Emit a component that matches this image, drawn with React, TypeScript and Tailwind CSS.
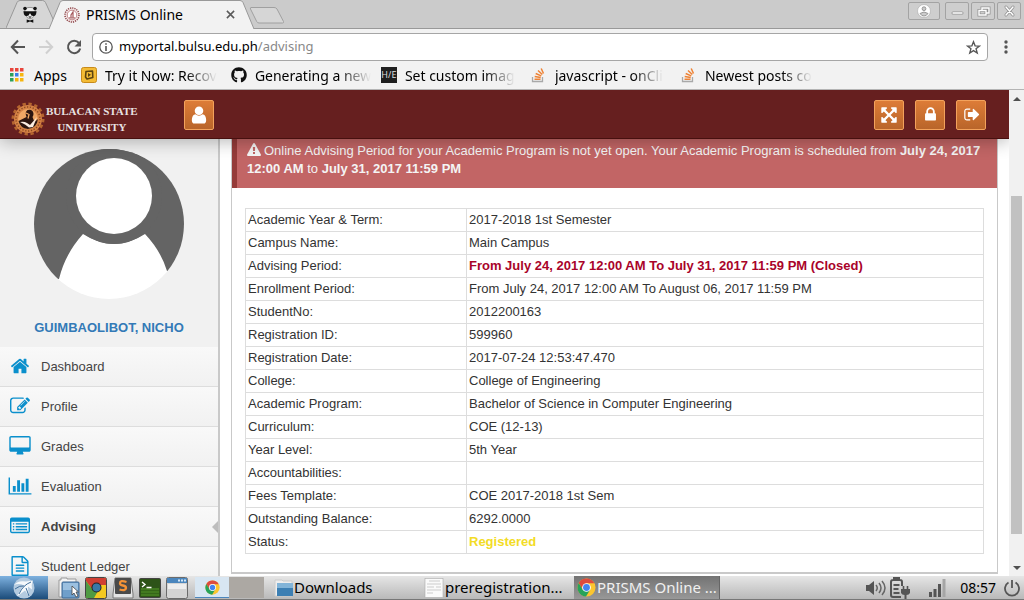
import type { ReactNode } from "react";
import { FaGithub } from "react-icons/fa";

const glyphs = {
  home: { box: "0 0 1792 1792", d: "M1472 992v480q0 26-19 45t-45 19h-384v-384h-256v384h-384q-26 0-45-19t-19-45v-480q0-1 .5-3t.5-3l575-474 575 474q1 2 1 6zm223-69l-62 74q-8 9-21 11h-3q-13 0-21-7l-692-577-692 577q-12 8-24 7-13-2-21-11l-62-74q-8-10-7-23.5t11-21.5l719-599q32-26 76-26t76 26l244 204v-195q0-14 9-23t23-9h192q14 0 23 9t9 23v408l219 182q10 8 11 21.5t-7 23.5z" },
  profile: { box: "0 0 1792 1792", d: "M888 1184l116-116-152-152-116 116v56h96v96h56zm440-720q-16-16-33 1l-350 350q-17 17-1 33t33-1l350-350q17-17 1-33zm80 594v190q0 119-84.5 203.5t-203.5 84.5h-832q-119 0-203.5-84.5t-84.5-203.5v-832q0-119 84.5-203.5t203.5-84.5h832q63 0 117 25 15 7 18 23 3 17-9 29l-49 49q-14 14-32 8-23-6-45-6h-832q-66 0-113 47t-47 113v832q0 66 47 113t113 47h832q66 0 113-47t47-113v-126q0-13 9-22l64-64q15-15 35-7t20 29zm-96-738l288 288-672 672h-288v-288zm444 132l-92 92-288-288 92-92q28-28 68-28t68 28l152 152q28 28 28 68t-28 68z" },
  desktop: { box: "0 0 1920 1792", d: "M1792 992v-832q0-13-9.500-22.500t-22.500-9.500h-1600q-13 0-22.500 9.500t-9.500 22.500v832q0 13 9.500 22.500t22.500 9.500h1600q13 0 22.500-9.500t9.500-22.500zM1920 160v1088q0 66-47 113t-113 47h-544q0 37 16 77.500t32 71 16 43.500q0 26-19 45t-45 19h-512q-26 0-45-19t-19-45q0-14 16-44t32-70 16-78h-544q-66 0-113-47t-47-113v-1088q0-66 47-113t113-47h1600q66 0 113 47t47 113z" },
  chart: { box: "0 0 2048 1792", d: "M640 896v512h-256v-512h256zm384-512v1024h-256v-1024h256zm1024 1152v128h-2048v-1536h128v1408h1920zm-640-896v768h-256v-768h256zm384-384v1152h-256v-1152h256z" },
  list: { box: "0 0 1792 1792", d: "M160 128h1472q160 0 160 160v1088q0 160-160 160h-1472q-160 0-160-160v-1088q0-160 160-160zM128 512v864q0 32 32 32h1472q32 0 32-32v-864zM256 640h128v128h-128zM512 640h1024v128h-1024zM256 896h128v128h-128zM512 896h1024v128h-1024zM256 1152h128v128h-128zM512 1152h1024v128h-1024z" },
  file: { box: "0 0 1536 1792", d: "M1468 380q28 28 48 76t20 88v1152q0 40-28 68t-68 28h-1344q-40 0-68-28t-28-68v-1600q0-40 28-68t68-28h896q40 0 88 20t76 48zM1024 136v376h376q-10-29-22-41l-313-313q-12-12-41-22zM1408 1664v-1024h-416q-40 0-68-28t-28-68v-416h-768v1536zM384 800q0-32 32-32h704q32 0 32 32v64q0 32-32 32h-704q-32 0-32-32zM416 1024h704q32 0 32 32v64q0 32-32 32h-704q-32 0-32-32v-64q0-32 32-32zM416 1280h704q32 0 32 32v64q0 32-32 32h-704q-32 0-32-32v-64q0-32 32-32z" },
  user: { box: "0 0 1792 1792", d: "M1536 1399q0 109-62.5 187t-150.5 78h-854q-88 0-150.5-78t-62.5-187q0-85 8.5-160.5t31.5-152 58.5-131 94-89 134.5-34.5q131 128 313 128t313-128q76 0 134.5 34.5t94 89 58.5 131 31.5 152 8.5 160.5zm-256-887q0 159-112.5 271.5t-271.5 112.5-271.5-112.5-112.5-271.5 112.5-271.5 271.5-112.5 271.5 112.5 112.5 271.5z" },
  lock: { box: "0 0 1792 1792", d: "M640 768h512v-192q0-106-75-181t-181-75-181 75-75 181v192zm832 96v576q0 40-28 68t-68 28h-960q-40 0-68-28t-28-68v-576q0-40 28-68t68-28h32v-192q0-184 132-316t316-132 316 132 132 316v192h32q40 0 68 28t28 68z" },
  expand: { box: "0 0 1792 1792", d: "M1411 541l-355 355 355 355 144-144q29-31 70-14 39 17 39 59v448q0 26-19 45t-45 19h-448q-42 0-59-40-17-39 14-69l144-144-355-355-355 355 144 144q31 30 14 69-17 40-59 40h-448q-26 0-45-19t-19-45v-448q0-42 40-59 39-17 69 14l144 144 355-355-355-355-144 144q-19 19-45 19-12 0-24-5-40-17-40-59v-448q0-26 19-45t45-19h448q42 0 59 40 17 39-14 69l-144 144 355 355 355-355-144-144q-31-30-14-69 17-40 59-40h448q26 0 45 19t19 45v448q0 42-39 59-13 5-25 5-26 0-45-19z" },
  signOut: { box: "0 0 1664 1792", d: "M704 1440q0 4 1 20t.5 26.5-3 23.5-10 19.5-20.5 6.5h-320q-119 0-203.5-84.5t-84.5-203.5v-704q0-119 84.5-203.5t203.5-84.5h320q13 0 22.5 9.5t9.5 22.5q0 4 1 20t.5 26.5-3 23.5-10 19.5-20.5 6.5h-320q-66 0-113 47t-47 113v704q0 66 47 113t113 47h312l11.5 1 11.5 3 8 5.5 7 9 2 13.5zm928-544q0 26-19 45l-544 544q-19 19-45 19t-45-19-19-45v-288h-448q-26 0-45-19t-19-45v-384q0-26 19-45t45-19h448v-288q0-26 19-45t45-19 45 19l544 544q19 19 19 45z" },
  warning: { box: "0 0 1792 1792", d: "M1024 1375v-190q0-14-9.5-23.5t-22.5-9.5h-192q-13 0-22.5 9.5t-9.5 23.5v190q0 14 9.5 23.5t22.5 9.5h192q13 0 22.5-9.5t9.5-23.5zm-2-374l18-459q0-12-10-19-13-11-24-11h-220q-11 0-24 11-10 7-10 21l17 457q0 10 10 16.5t24 6.5h185q14 0 23.5-6.5t10.5-16.5zm-14-934l768 1408q35 63-2 126-17 29-46.5 46t-63.5 17h-1536q-34 0-63.5-17t-46.5-46q-37-63-2-126l768-1408q17-31 47-49t65-18 65 18 47 49z" },
};

function Glyph({ name, className }: { name: keyof typeof glyphs; className: string }) {
  const g = glyphs[name];
  return (
    <svg viewBox={g.box} className={className} fill="currentColor" fillRule="evenodd" aria-hidden="true">
      <path d={g.d} />
    </svg>
  );
}

/* ---------- Browser chrome ---------- */

function PandaIcon() {
  return (
    <svg viewBox="0 0 16 18" className="relative h-[17px] w-4" aria-hidden="true">
      <path d="M2.500 5Q3 1.500 8 1.500T13.500 5L13 9Q11 13.500 8 13.500T3 9z" fill="#eee" stroke="#555" strokeWidth=".6" />
      <circle cx="2.700" cy="2.600" r="1.900" fill="#111" />
      <circle cx="13.300" cy="2.600" r="1.900" fill="#111" />
      <path d="M1 5.500h14l-.6 3.200q-.8 2-3 2-2.400 0-3-2.700h-.8q-.6 2.700-3 2.700-2.200 0-3-2z" fill="#111" />
      <path d="M6.200 11h3.600L8 12.800zM4.500 14.300 8 15.300l3.500-1v3.500L8 16.500l-3.500 1.300z" fill="#111" />
    </svg>
  );
}

function SealIcon() {
  return (
    <svg viewBox="0 0 16 16" className="relative size-4" aria-hidden="true">
      <circle cx="8" cy="8" r="7" fill="#f3e4e4" stroke="#8b4044" strokeWidth="1.500" strokeDasharray="1.200 1" />
      <circle cx="8" cy="8" r="4.800" fill="#fff" stroke="#c28b8e" />
      <path d="M5.200 10.800h5.600M7 10V8L9 5v5" stroke="#a5575b" strokeWidth="1.200" fill="none" />
    </svg>
  );
}

function TabStrip() {
  return (
    <div className="relative flex h-[29px] shrink-0 border-b border-[#999] bg-[#cbcbcb]">
      <button aria-label="Pinned tab" className="relative ml-[6px] flex h-[28px] w-[48px] items-center justify-center">
        <svg viewBox="0 0 48 28" preserveAspectRatio="none" className="absolute inset-0 h-full w-full" aria-hidden="true">
          <path d="M0 28 11 2.500Q12 .5 14 .5H36.500Q38.500 .5 39.500 2.500L47 19V28" fill="#d6d6d6" stroke="#999" />
        </svg>
        <PandaIcon />
      </button>
      <div className="relative z-10 -mx-[5px] flex h-[29px] w-[205px] items-center gap-[6px] pr-[19px] pl-[15px]">
        <svg viewBox="0 0 205 29" preserveAspectRatio="none" className="absolute inset-0 h-full w-full" aria-hidden="true">
          <path d="M0 29 11 2.500Q12 .5 14 .5H191Q193 .5 194 2.500L205 29" fill="#f2f2f2" stroke="#999" />
        </svg>
        <SealIcon />
        <span className="relative flex-1 truncate text-[14px]">PRISMS Online</span>
        <button aria-label="Close tab" className="relative">
          <svg viewBox="0 0 10 10" className="size-[9px]" aria-hidden="true">
            <path d="M1 1l8 8M9 1l-8 8" stroke="#5a5a5a" strokeWidth="1.700" />
          </svg>
        </button>
      </div>
      <button aria-label="New tab" className="mt-[6px] self-start">
        <svg viewBox="0 0 36 18" className="h-[18px] w-[36px]" aria-hidden="true">
          <path d="M2 1.500H25Q27 1.500 28 3L34.500 15.500Q35 17 33.500 17H10Q8.500 17 7.700 15.500L1.500 3Q1 1.500 2 1.500z" fill="#d6d6d6" stroke="#a0a0a0" />
        </svg>
      </button>
      <div className="ml-auto flex gap-[2px] pt-[2px] pr-[3px]">
        <button aria-label="Profile switcher" className="mr-[3px] flex h-[18px] w-[32px] items-center justify-center rounded-xs border border-[#a3a3a3] bg-[#cecece]">
          <svg viewBox="0 0 14 14" className="size-[14px]" aria-hidden="true">
            <circle cx="7" cy="7" r="6.500" fill="#fff" stroke="#aaa" strokeWidth=".6" />
            <circle cx="7" cy="4.700" r="1.900" fill="#ccc" stroke="#888" strokeWidth=".8" />
            <path d="M3 9.500Q7 6.500 11 9.500 9.500 12 7 12T3 9.500" fill="#ccc" stroke="#888" strokeWidth=".8" />
          </svg>
        </button>
        {[
          ["Minimize", "M3 9h9"],
          ["Restore", "M6 6V4h7v5h-3M3 6.500h7v4.500H3z"],
          ["Close", "M4 3l7 8M11 3l-7 8"],
        ].map(([label, d]) => (
          <button key={label} aria-label={label} className="flex h-[18px] w-[24px] items-center justify-center rounded-xs border border-[#a3a3a3] bg-[#cecece]">
            <svg viewBox="0 0 15 14" className="h-[14px] w-[15px]" fill="none" strokeLinecap="round" aria-hidden="true">
              <path d={d} stroke="#939393" strokeWidth="3" />
              <path d={d} stroke="#fff" strokeWidth="1.400" />
            </svg>
          </button>
        ))}
      </div>
    </div>
  );
}

function AddressBar() {
  return (
    <div className="flex shrink-0 items-center pt-[4px] pr-[16px] pl-[10px]">
      <button aria-label="Back" className="mr-[12px]">
        <svg viewBox="0 0 16 16" className="size-4" fill="none" stroke="#555" strokeWidth="2" aria-hidden="true">
          <path d="M15 8H2M8 1.500 1.800 8 8 14.500" />
        </svg>
      </button>
      <button aria-label="Forward" className="mr-[12px]">
        <svg viewBox="0 0 16 16" className="size-4" fill="none" stroke="#d0d0d0" strokeWidth="2" aria-hidden="true">
          <path d="M1 8h13M8 1.500 14.200 8 8 14.500" />
        </svg>
      </button>
      <button aria-label="Reload" className="mr-[10px]">
        <svg viewBox="0 0 16 16" className="size-4" aria-hidden="true">
          <path d="M13 4A6.200 6.200 0 1 0 14.200 9.500" fill="none" stroke="#555" strokeWidth="2" />
          <path d="M15 1v6.500H8.500z" fill="#555" />
        </svg>
      </button>
      <div className="flex h-[28px] flex-1 items-center gap-[6px] rounded-sm border border-[#a6a6a6] bg-white px-[6px]">
        <svg viewBox="0 0 14 14" className="size-[14px]" aria-hidden="true">
          <circle cx="7" cy="7" r="6.200" fill="none" stroke="#555" strokeWidth="1.300" />
          <path d="M7 3.200v1.600M7 6v5" stroke="#555" strokeWidth="1.600" />
        </svg>
        <a href="#address" className="flex-1 text-[13px] text-black">
          myportal.bulsu.edu.ph<span className="text-[#888]">/advising</span>
        </a>
        <button aria-label="Bookmark this page">
          <svg viewBox="0 0 16 16" className="size-[15px]" aria-hidden="true">
            <path d="m8 1.800 1.700 4.400 4.700.2-3.700 2.900 1.300 4.600L8 11.300l-4 2.600 1.300-4.600-3.700-2.900 4.700-.2z" fill="none" stroke="#555" strokeWidth="1.400" />
          </svg>
        </button>
      </div>
      <button aria-label="Menu" className="ml-[16px]">
        <svg viewBox="0 0 4 14" className="h-[14px] w-[4px]" fill="#555" aria-hidden="true">
          <circle cx="2" cy="2" r="1.700" />
          <circle cx="2" cy="7" r="1.700" />
          <circle cx="2" cy="12" r="1.700" />
        </svg>
      </button>
    </div>
  );
}

function StackIcon() {
  return (
    <svg viewBox="0 0 16 16" className="size-4" fill="none" aria-hidden="true">
      <path d="M1.500 10v4.500h10V10" stroke="#a9a9a9" strokeWidth="1.300" />
      <path d="M3.500 12.300h6M3.700 9.600l6 1M4.700 6.500l5.600 2.400M7 3.500l4.300 4M10.200 1.500l2.300 5" stroke="#ee8234" strokeWidth="1.500" />
    </svg>
  );
}

const appColors = ["#e8453c", "#e8453c", "#e8453c", "#2c9f5b", "#3a7de8", "#f6b50f", "#2c9f5b", "#f6b50f", "#f6b50f"];

function BookmarkBar() {
  const marks: { label: string; icon: ReactNode }[] = [
    {
      label: "Try it Now: Recov",
      icon: (
        <svg viewBox="0 0 16 16" className="size-4" aria-hidden="true">
          <rect x=".5" y=".5" width="15" height="15" rx="2" fill="#f3bb35" stroke="#c78a1a" />
          <path d="M5 4.500 11.500 4l.3 6.500L6 12l-1.500-2z" fill="none" stroke="#5b4310" strokeWidth="1.600" strokeLinejoin="round" />
          <path d="M7 6v4l3-2.300z" fill="#5b4310" />
        </svg>
      ),
    },
    { label: "Generating a new", icon: <FaGithub className="size-4 text-[#111]" /> },
    {
      label: "Set custom imag",
      icon: <span className="flex size-4 items-center justify-center bg-[#1f1f1f] text-[9px] text-[#ddd]">H/E</span>,
    },
    { label: "javascript - onCli", icon: <StackIcon /> },
    { label: "Newest posts co", icon: <StackIcon /> },
  ];
  return (
    <nav aria-label="Bookmarks" className="flex h-[28px] shrink-0 items-center pl-[10px] text-[14px] text-black">
      <a href="#apps" className="mr-[14px] flex items-center gap-[10px]">
        <svg viewBox="0 0 14 14" className="size-[14px]" aria-hidden="true">
          {appColors.map((c, i) => (
            <rect key={i} x={(i % 3) * 5} y={Math.floor(i / 3) * 5} width="3.500" height="3.500" fill={c} />
          ))}
        </svg>
        Apps
      </a>
      {marks.map((m) => (
        <a key={m.label} href="#bookmark" className="flex w-[150px] items-center gap-[8px]">
          <span className="shrink-0">{m.icon}</span>
          <span className="whitespace-nowrap [mask-image:linear-gradient(to_right,black_72%,transparent)]">{m.label}</span>
        </a>
      ))}
    </nav>
  );
}

/* ---------- Portal page ---------- */

function OrangeButton({ label, children }: { label: string; children: ReactNode }) {
  return (
    <button aria-label={label} className="flex size-[30px] items-center justify-center rounded-xs border border-[#f3a25c] bg-linear-to-b from-[#dd7c37] to-[#b9652a] text-white">
      {children}
    </button>
  );
}

function UniversitySeal() {
  return (
    <svg viewBox="0 0 34 34" className="size-[34px] shrink-0" aria-hidden="true">
      <circle cx="17" cy="17" r="15.200" fill="none" stroke="#b5652f" strokeWidth="2.600" strokeDasharray="3.300 2.670" />
      <circle cx="17" cy="17" r="14" fill="#d58245" />
      <circle cx="17" cy="17" r="12" fill="none" stroke="#8a4720" strokeWidth="1.400" strokeDasharray="1.300 1.600" />
      <circle cx="17" cy="17" r="10" fill="#f0a765" />
      <path d="M7.500 19q4-2 8-4-2-5 1-7 3-1 5 1 2 3 0 6l2 5 3.500-3q-1 9-10 10-8-1-9.500-8z" fill="#2c1610" />
      <path d="M9 20q4-1 7 1l3 2 7-8-4 10-4 .5-4-3z" fill="#fbeee2" />
      <path d="m15 11 3 1.500-1 4" stroke="#f0a765" strokeWidth="1.300" fill="none" />
    </svg>
  );
}

function PortalHeader() {
  return (
    <header className="relative z-10 flex h-[49px] shrink-0 items-center border-b border-[#47100f] bg-[#661f1f] pt-px pl-[11px] shadow-[0_2px_18px_rgba(0,0,0,0.3)]">
      <a href="#home" className="flex w-[173px] items-center gap-[1px] pt-[8px]">
        <UniversitySeal />
        <span className="flex flex-col items-center font-['Liberation_Serif',serif] font-bold text-[#e9e2e2]">
          <span className="text-[11px] leading-[16px] whitespace-nowrap">BULACAN STATE</span>
          <span className="text-[11px] leading-[16px]">UNIVERSITY</span>
        </span>
      </a>
      <OrangeButton label="Account">
        <Glyph name="user" className="size-[20px]" />
      </OrangeButton>
      <div className="ml-auto flex gap-[11px] pr-[23px]">
        <OrangeButton label="Full screen">
          <Glyph name="expand" className="size-[18px]" />
        </OrangeButton>
        <OrangeButton label="Lock screen">
          <Glyph name="lock" className="size-[17px]" />
        </OrangeButton>
        <OrangeButton label="Sign out">
          <Glyph name="signOut" className="size-[17px]" />
        </OrangeButton>
      </div>
    </header>
  );
}

const menu: { label: string; icon: keyof typeof glyphs; size: string; active?: boolean }[] = [
  { label: "Dashboard", icon: "home", size: "size-[20px]" },
  { label: "Profile", icon: "profile", size: "size-[20px]" },
  { label: "Grades", icon: "desktop", size: "h-[20px] w-[22px]" },
  { label: "Evaluation", icon: "chart", size: "h-[20px] w-[24px]" },
  { label: "Advising", icon: "list", size: "size-[20px]", active: true },
  { label: "Student Ledger", icon: "file", size: "h-[20px] w-[18px]" },
];

function Sidebar() {
  return (
    <aside className="flex w-[220px] shrink-0 flex-col overflow-hidden border-r-2 border-[#c9c9c9] bg-[#f1f1f1]">
      <svg viewBox="0 0 150 150" className="mt-[10px] ml-[34px] size-[150px] shrink-0" role="img" aria-label="Student photo">
        <clipPath id="avatar">
          <circle cx="75" cy="75" r="75" />
        </clipPath>
        <g clipPath="url(#avatar)">
          <path d="M0 0H150V150H0z" fill="#fff" />
          <path d="M-2 -2H152V122H133Q127 102 111 85Q80 105 49 85Q31 105 25 130L-2 132z" fill="#646464" />
          <circle cx="80" cy="47" r="48" fill="#646464" />
          <circle cx="80" cy="47" r="38" fill="#fff" />
        </g>
      </svg>
      <p className="my-[19px] text-center text-[13px] leading-[20px] font-bold text-[#337ab7]">
        <a href="#student">GUIMBAOLIBOT, NICHO</a>
      </p>
      <nav aria-label="Student menu" className="-mt-[10px]">
        {menu.map((m) => (
          <a
            key={m.label}
            href="#menu"
            className="relative flex h-[40px] items-center border-b border-[#ddd] bg-linear-to-b from-[#f9f9f9] to-[#f1f1f1] pl-[8px] text-[13px] text-[#444]"
          >
            <span className="mr-[9px] flex w-[24px] justify-center pb-[2px] text-[#0a8fcc]">
              <Glyph name={m.icon} className={m.size} />
            </span>
            <span className={m.active ? "font-bold" : ""}>{m.label}</span>
            {m.active && (
              <svg viewBox="0 0 6 12" className="absolute right-0 h-[12px] w-[6px]" aria-hidden="true">
                <path d="M6 0v12L0 6z" fill="#bdbdbd" />
              </svg>
            )}
          </a>
        ))}
      </nav>
    </aside>
  );
}

const details: [string, string, string?][] = [
  ["Academic Year & Term:", "2017-2018 1st Semester"],
  ["Campus Name:", "Main Campus"],
  ["Advising Period:", "From July 24, 2017 12:00 AM To July 31, 2017 11:59 PM (Closed)", "font-bold text-[#a90329]"],
  ["Enrollment Period:", "From July 24, 2017 12:00 AM To August 06, 2017 11:59 PM"],
  ["StudentNo:", "2012200163"],
  ["Registration ID:", "599960"],
  ["Registration Date:", "2017-07-24 12:53:47.470"],
  ["College:", "College of Engineering"],
  ["Academic Program:", "Bachelor of Science in Computer Engineering"],
  ["Curriculum:", "COE (12-13)"],
  ["Year Level:", "5th Year"],
  ["Accountabilities:", ""],
  ["Fees Template:", "COE 2017-2018 1st Sem"],
  ["Outstanding Balance:", "6292.0000"],
  ["Status:", "Registered", "font-bold text-[#f3dc26]"],
];

function AdvisingPanel() {
  return (
    <main className="min-w-0 flex-1 bg-white pr-[11px] pl-[11px]">
      <section className="border-x border-b-2 border-[#c9c9c9] pb-[18px]">
        <p role="alert" className="border-l-[5px] border-[#953b39] bg-[#c26565] pt-[3px] pr-[10px] pb-[10px] pl-[10px] text-[13px] leading-[18px] text-[#f4f4f4]">
          <Glyph name="warning" className="mr-[3px] inline size-[14px] align-[-2px]" />
          Online Advising Period for your Academic Program is not yet open. Your Academic Program is scheduled from{" "}
          <strong>July 24, 2017 12:00 AM</strong> to <strong>July 31, 2017 11:59 PM</strong>
        </p>
        <div className="mt-[20px] px-[13px]">
          <table className="w-full table-fixed border-collapse text-[13px] leading-[18px] text-[#333]">
            <tbody>
              {details.map(([label, value, tone]) => (
                <tr key={label} className="h-[23px]">
                  <th scope="row" className="w-[221px] border border-[#ddd] p-[2px] text-left font-normal">
                    {label}
                  </th>
                  <td className={`border border-[#ddd] p-[2px] ${tone ?? ""}`}>{value}</td>
                </tr>
              ))}
            </tbody>
          </table>
        </div>
      </section>
    </main>
  );
}

function PageScrollbar() {
  return (
    <div className="flex w-[15px] shrink-0 flex-col items-center bg-[#f1f1f1]">
      <button aria-label="Scroll up" className="flex h-[17px] items-center">
        <svg viewBox="0 0 8 4" className="h-[4px] w-[8px]" aria-hidden="true"><path d="M0 4 4 0l4 4z" fill="#505050" /></svg>
      </button>
      <div className="flex w-[11px] flex-1 flex-col">
        <div className="flex-[89]" />
        <div className="flex-[338] bg-[#c1c1c1]" />
        <div className="flex-[25]" />
      </div>
      <button aria-label="Scroll down" className="flex h-[17px] items-center">
        <svg viewBox="0 0 8 4" className="h-[4px] w-[8px]" aria-hidden="true"><path d="M0 0h8L4 4z" fill="#505050" /></svg>
      </button>
    </div>
  );
}

/* ---------- Desktop taskbar ---------- */

function ChromeIcon({ className }: { className: string }) {
  return (
    <svg viewBox="0 0 20 20" className={className} aria-hidden="true">
      <circle cx="10" cy="10" r="9.500" fill="#fbc62f" />
      <path d="M1.800 5.200A9.500 9.500 0 0 1 18.300 5.500H10L6 12.300z" fill="#dd4b3e" />
      <path d="M1.800 5.200A9.500 9.500 0 0 0 9.500 19.500l4.300-7.200H6z" fill="#27a35a" />
      <circle cx="10" cy="10" r="4.600" fill="#fff" />
      <circle cx="10" cy="10" r="3.600" fill="#4384f0" />
    </svg>
  );
}

function FilesIcon() {
  return (
    <svg viewBox="0 0 22 22" className="size-[22px]" aria-hidden="true">
      <path d="M1 3h2V1h6v1h9v18H1z" fill="#f4f4f4" stroke="#999" />
      <rect x="4" y="5" width="17" height="16" rx="1" fill="#6f9fca" stroke="#3a6794" />
      <path d="M5 6h15v7H5z" fill="#9bc0e0" />
      <path d="M14 9v9l2-2 2 4 2-1-2-4h2.500z" fill="#fff" stroke="#444" strokeWidth=".8" />
    </svg>
  );
}

function BrowserIcon() {
  return (
    <svg viewBox="0 0 22 22" className="size-[22px]" aria-hidden="true">
      <rect x=".5" y=".5" width="21" height="21" rx="2" fill="#f4c921" stroke="#444" />
      <path d="M1 1h20v7H11l-4 4-6-8z" fill="#cf3f33" />
      <path d="M1 4v17h8l4-7-6-2z" fill="#4f9a43" />
      <circle cx="11.500" cy="10.500" r="5" fill="#222" />
      <circle cx="11.500" cy="10.500" r="4" fill="#3a78a8" />
    </svg>
  );
}

function EditorIcon() {
  return (
    <svg viewBox="0 0 22 22" className="size-[22px]" aria-hidden="true">
      <path d="M1 17 3 1h16l2 16v4H1z" fill="#e4e4e4" stroke="#777" />
      <rect x="3" y="1" width="16" height="16" rx="1" fill="#4a4a4a" />
      <path d="M14.500 5Q8 2.800 8 6.200 8 8 11 8.500T14 11Q13.500 14.500 7.500 12.500" fill="none" stroke="#f39237" strokeWidth="2.300" />
    </svg>
  );
}

function TerminalIcon() {
  return (
    <svg viewBox="0 0 22 22" className="size-[22px]" aria-hidden="true">
      <rect x=".5" y="1.500" width="21" height="19" rx="1" fill="#2d5318" stroke="#444" />
      <path d="M2 11h18v8H2z" fill="#427a20" />
      <path d="M2 13.500h18M2 16.500h18" stroke="#356619" />
      <path d="m3 5 3 2.500L3 10M7.500 10.500h5" stroke="#fff" strokeWidth="1.400" fill="none" />
    </svg>
  );
}

function WindowIcon() {
  return (
    <svg viewBox="0 0 22 22" className="size-[22px]" aria-hidden="true">
      <rect x=".5" y=".5" width="21" height="21" rx="2" fill="#d4d4d4" stroke="#6b6b6b" />
      <path d="M1 1h20v5H1z" fill="#4b86bd" />
      <path d="M12 2.500h2v2h-2zM15 2.500h2v2h-2zM18 2.500h2v2h-2z" fill="#d6e8f7" />
      <path d="M2 7h18v5H2z" fill="#eee" />
    </svg>
  );
}

function Taskbar() {
  const launchers: [string, ReactNode][] = [
    ["File manager", <FilesIcon />],
    ["Chrome", <BrowserIcon />],
    ["Text editor", <EditorIcon />],
    ["Terminal", <TerminalIcon />],
    ["Show desktop", <WindowIcon />],
  ];
  return (
    <footer className="flex h-[24px] shrink-0 items-stretch border-b border-[#777] bg-linear-to-b from-[#e6e6e6] to-[#b9b9b9] text-[15px] text-black">
      <button aria-label="Start menu" className="flex w-[48px] shrink-0 items-center justify-center bg-linear-to-b from-[#7eb2e0] to-[#1b4c7a]">
        <svg viewBox="0 0 22 22" className="size-[22px]" aria-hidden="true">
          <circle cx="11" cy="11" r="10.500" fill="#b4cbe0" />
          <path d="M1 8Q5 3 13 4.500L20 3.500q-2 4-1 9l-4-3q0 7 2 11l-5-7-8 6q4-8 7-11Q6 6 1 8z" fill="#f4f8fb" />
          <path d="M6 17q4-9 12-12M2 12q5-4 9-3M13 11l3 8" stroke="#3f6e9b" fill="none" />
        </svg>
      </button>
      <div className="ml-[10px] flex shrink-0 items-center gap-[5px]">
        {launchers.map(([label, icon]) => (
          <button key={label} aria-label={label}>{icon}</button>
        ))}
      </div>
      <div className="ml-[7px] flex shrink-0 py-[1px]">
        <button aria-label="Workspace 1" className="flex w-[34px] items-center justify-center border-b border-[#4b86bd] bg-[#d8e6f2]">
          <ChromeIcon className="size-[15px]" />
        </button>
        <button aria-label="Workspace 2" className="w-[35px] bg-[#aca8a3]" />
      </div>
      <div className="ml-[10px] flex min-w-0 flex-1">
        <button className="flex w-[150px] items-center text-left">
          <svg viewBox="0 0 20 20" className="size-[20px] shrink-0" aria-hidden="true">
            <path d="M1 2h7l1 1h9v15H1z" fill="#eee" stroke="#ccc" />
            <path d="M3 6h16v12H3z" fill="#3c7fb3" />
            <path d="M3 5h16v5H3z" fill="#82b4d8" />
          </svg>
          <span>Downloads</span>
        </button>
        <button className="flex w-[150px] items-center gap-[1px] text-left">
          <svg viewBox="0 0 20 20" className="size-[20px] shrink-0" aria-hidden="true">
            <rect x="1" y=".5" width="18" height="19" fill="#fafafa" stroke="#aaa" strokeWidth=".6" />
            <path d="M5 3h11M3 6h14M3 9h7M12 9h5M3 12h14M3 15h6" stroke="#ccc" />
          </svg>
          <span className="whitespace-nowrap">preregistration...</span>
        </button>
        <button className="flex w-[146px] items-center gap-[1px] border-r border-[#666] bg-linear-to-b from-[#737373] to-[#989898] pl-[3px] text-left text-[#f0f0f0]">
          <ChromeIcon className="size-[19px] shrink-0" />
          <span className="whitespace-nowrap">PRISMS Online ...</span>
        </button>
      </div>
      <div className="flex shrink-0 items-center pr-[3px]">
        <svg viewBox="0 0 22 18" className="mr-[2px] h-[18px] w-[22px]" aria-label="Volume" role="img">
          <path d="M1 6h3l5-4v14l-5-4H1z" fill="#555" />
          <path d="M11 6q2.500 3 0 6M14 4q4 5 0 10M17 2q6 7 0 14" fill="none" stroke="#666" strokeWidth="1.500" />
        </svg>
        <svg viewBox="0 0 22 22" className="mr-[17px] size-[22px]" aria-label="Battery charging" role="img">
          <path d="M5 1h5v2H5zM13 9V5q0-2-2-2H4Q2 3 2 5v13q0 2 2 2h8" fill="none" stroke="#555" strokeWidth="2" />
          <path d="M4.500 8h6M4.500 12h5M4.500 16h6" stroke="#555" strokeWidth="2" />
          <path d="M14.500 9v4M18.500 9v4" stroke="#555" strokeWidth="1.600" />
          <path d="M12 12h9v4q-1 2-3.500 2v4h-2v-4Q13 18 12 16z" fill="#555" />
        </svg>
        <svg viewBox="0 0 18 20" className="mr-[14px] h-[20px] w-[18px]" aria-label="Signal strength" role="img">
          <path d="M1 14h3v5H1zM5.500 11h3v8h-3zM10 6h3v13h-3z" fill="#555" />
          <path d="M14.500 1h3v18h-3z" fill="#a5a5a5" />
        </svg>
        <time className="mr-[7px] text-[14px]">08:57</time>
        <button aria-label="Shut down">
          <svg viewBox="0 0 18 18" className="size-[18px]" fill="none" stroke="#555" strokeWidth="1.800" aria-hidden="true">
            <path d="M5.500 3.500a7 7 0 1 0 7 0M9 1v8" />
          </svg>
        </button>
      </div>
    </footer>
  );
}

export default function App() {
  return (
    <div className="flex h-screen flex-col overflow-hidden bg-[#f2f2f2] font-['Noto_Sans',sans-serif]">
      <TabStrip />
      <AddressBar />
      <BookmarkBar />
      <div className="flex min-h-0 flex-1 border-t border-[#b4b4b4] font-['Liberation_Sans',sans-serif]">
        <div className="flex min-w-0 flex-1 flex-col overflow-hidden bg-white">
          <PortalHeader />
          <div className="flex min-h-0 flex-1 overflow-hidden">
            <Sidebar />
            <AdvisingPanel />
          </div>
        </div>
        <PageScrollbar />
      </div>
      <Taskbar />
    </div>
  );
}
